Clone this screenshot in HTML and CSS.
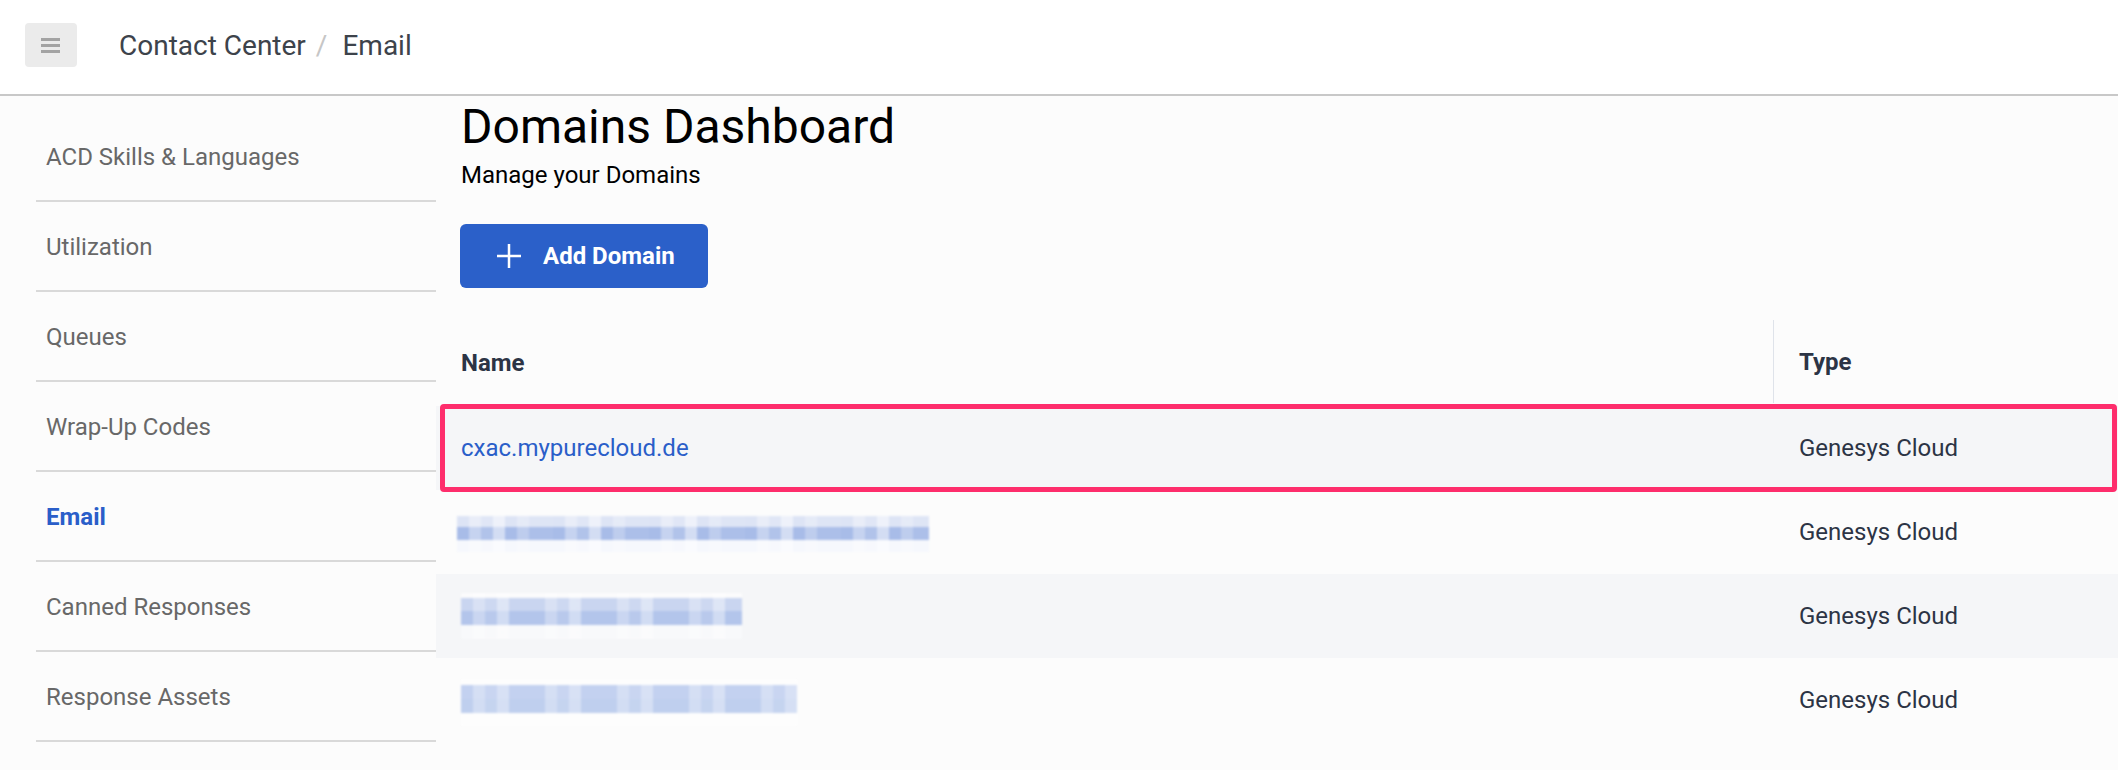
FILE: index.html
```html
<!DOCTYPE html>
<html lang="en">
<head>
<meta charset="utf-8">
<title>Domains Dashboard</title>
<link rel="stylesheet" href="styles.css">
</head>
<body>
<header class="topbar">
  <button class="menu-btn" aria-label="Menu">
    <svg width="20" height="16" viewBox="0 0 20 16"><rect x="0" y="1" width="19" height="3" fill="#a3a3a3"/><rect x="0" y="7" width="19" height="3" fill="#a3a3a3"/><rect x="0" y="13" width="19" height="3" fill="#a3a3a3"/></svg>
  </button>
  <nav class="crumbs">
    <span>Contact Center</span><span class="sep">/</span><span>Email</span>
  </nav>
</header>
<div class="layout">
  <aside class="sidebar">
    <a class="side-item">ACD Skills &amp; Languages</a>
    <a class="side-item">Utilization</a>
    <a class="side-item">Queues</a>
    <a class="side-item">Wrap-Up Codes</a>
    <a class="side-item active">Email</a>
    <a class="side-item">Canned Responses</a>
    <a class="side-item">Response Assets</a>
  </aside>
  <main class="content">
    <h1 class="title">Domains Dashboard</h1>
    <p class="subtitle">Manage your Domains</p>
    <button class="add-btn">
      <svg width="26" height="26" viewBox="0 0 26 26"><path d="M13 1v24M1 13h24" stroke="#fff" stroke-width="2.5" fill="none"/></svg>
      <span>Add Domain</span>
    </button>
    <div class="table">
      <div class="row head">
        <div class="cell">Name</div>
        <div class="cell type-head">Type</div>
      </div>
      <div class="row striped highlighted">
        <div class="cell"><a class="link">cxac.mypurecloud.de</a></div>
        <div class="cell type">Genesys Cloud</div>
      </div>
      <div class="row">
        <div class="cell"><span class="blur blur-a"></span></div>
        <div class="cell type">Genesys Cloud</div>
      </div>
      <div class="row striped">
        <div class="cell"><span class="blur blur-b"></span></div>
        <div class="cell type">Genesys Cloud</div>
      </div>
      <div class="row">
        <div class="cell"><span class="blur blur-c"></span></div>
        <div class="cell type">Genesys Cloud</div>
      </div>
    </div>
  </main>
</div>
</body>
</html>
```
FILE: styles.css
```css
* { box-sizing: border-box; }
html, body { margin: 0; padding: 0; }
body {
  background: #fcfcfc;
  font-family: Roboto, "Liberation Sans", sans-serif;
  width: 2118px;
  height: 770px;
  overflow: hidden;
}
.topbar {
  height: 96px;
  background: #fff;
  border-bottom: 2px solid #c8c8c8;
  display: flex;
  align-items: center;
  padding: 0 0 4px 25px;
}
.menu-btn {
  width: 52px;
  height: 44px;
  border: none;
  border-radius: 4px;
  background: #ebebeb;
  display: flex;
  align-items: center;
  justify-content: center;
  padding: 0;
}
.crumbs {
  margin-left: 42px;
  font-size: 28px;
  color: #3d434b;
  display: flex;
  align-items: center;
}
.crumbs .sep {
  color: #c6c6c6;
  margin: 0 15px 0 10px;
}
.layout {
  display: flex;
}
.sidebar {
  width: 436px;
  padding: 16px 0 0 36px;
  display: flex;
  flex-direction: column;
}
.side-item {
  height: 90px;
  display: flex;
  align-items: center;
  padding: 2px 0 0 10px;
  border-bottom: 2px solid #d9d9d9;
  font-size: 24px;
  color: #686868;
}
.side-item.active {
  color: #2a5ec9;
  font-weight: 700;
}
.content {
  flex: 1;
  display: flex;
  flex-direction: column;
  align-items: flex-start;
}
.title {
  margin: 3px 0 0 25px;
  font-size: 48px;
  line-height: 56px;
  font-weight: 400;
  color: #000;
}
.subtitle {
  margin: 6px 0 0 25px;
  font-size: 24px;
  line-height: 28px;
  color: #000;
}
.add-btn {
  margin: 35px 0 0 24px;
  width: 248px;
  height: 64px;
  border: none;
  border-radius: 6px;
  background: #2b60c9;
  color: #fff;
  display: flex;
  align-items: center;
  gap: 21px;
  padding: 0 0 0 36px;
  font-family: Roboto, "Liberation Sans", sans-serif;
  font-size: 24px;
  font-weight: 700;
}
.table {
  margin-top: 32px;
  width: 100%;
}
.row {
  display: grid;
  grid-template-columns: 1337px 1fr;
  height: 84px;
  position: relative;
}
.row.head {
  height: 86px;
}
.row.striped {
  background: #f5f6f8;
}
.cell {
  display: flex;
  align-items: center;
  padding-left: 25px;
  font-size: 24px;
}
.head .cell {
  font-weight: 700;
  color: #2c3445;
}
.head .type-head {
  border-left: 1px solid #dfe3ea;
  padding-left: 25px;
  height: 83px;
}
.type {
  padding-left: 26px;
  color: #2c3445;
}
.link {
  color: #2a5ec9;
}
.highlighted::after {
  content: "";
  position: absolute;
  left: 4px;
  right: 1px;
  top: -2px;
  bottom: -2px;
  border: 5px solid #fe2d6c;
  border-radius: 4px;
  pointer-events: none;
}
.blur {
  display: block;
  filter: blur(1.2px);
  margin-left: -4px;
}
.blur-a {
  width: 472px;
  height: 36px;
  margin-top: 4px;
  background:
    repeating-linear-gradient(90deg, rgba(255,255,255,0) 0 12px, rgba(255,255,255,.35) 12px 24px, rgba(255,255,255,.1) 24px 36px, rgba(255,255,255,.5) 36px 48px, rgba(255,255,255,0) 48px 60px, rgba(255,255,255,.25) 60px 72px, rgba(255,255,255,.05) 72px 96px),
    linear-gradient(#dde4f5 0 11px, #a8bce8 11px 24px, #f6f8fd 24px 36px);
}
.blur-b {
  width: 281px;
  height: 46px;
  margin-left: 0;
  background:
    repeating-linear-gradient(90deg, rgba(255,255,255,0) 0 12px, rgba(255,255,255,.3) 12px 24px, rgba(255,255,255,.08) 24px 36px, rgba(255,255,255,.4) 36px 48px, rgba(255,255,255,0) 48px 72px),
    linear-gradient(#fbfbfc 0 5px, #c9d5f0 5px 18px, #b3c5eb 18px 32px, #f8f9fb 32px 46px);
}
.blur-c {
  width: 336px;
  height: 47px;
  margin-left: 0;
  margin-top: 4px;
  background:
    repeating-linear-gradient(90deg, rgba(255,255,255,0) 0 12px, rgba(255,255,255,.3) 12px 24px, rgba(255,255,255,.1) 24px 36px, rgba(255,255,255,.35) 36px 48px, rgba(255,255,255,0) 48px 72px),
    linear-gradient(#fdfdfd 0 6px, #c3d1f0 6px 20px, #bfcfee 20px 34px, #fdfdfd 34px 47px);
}
```
